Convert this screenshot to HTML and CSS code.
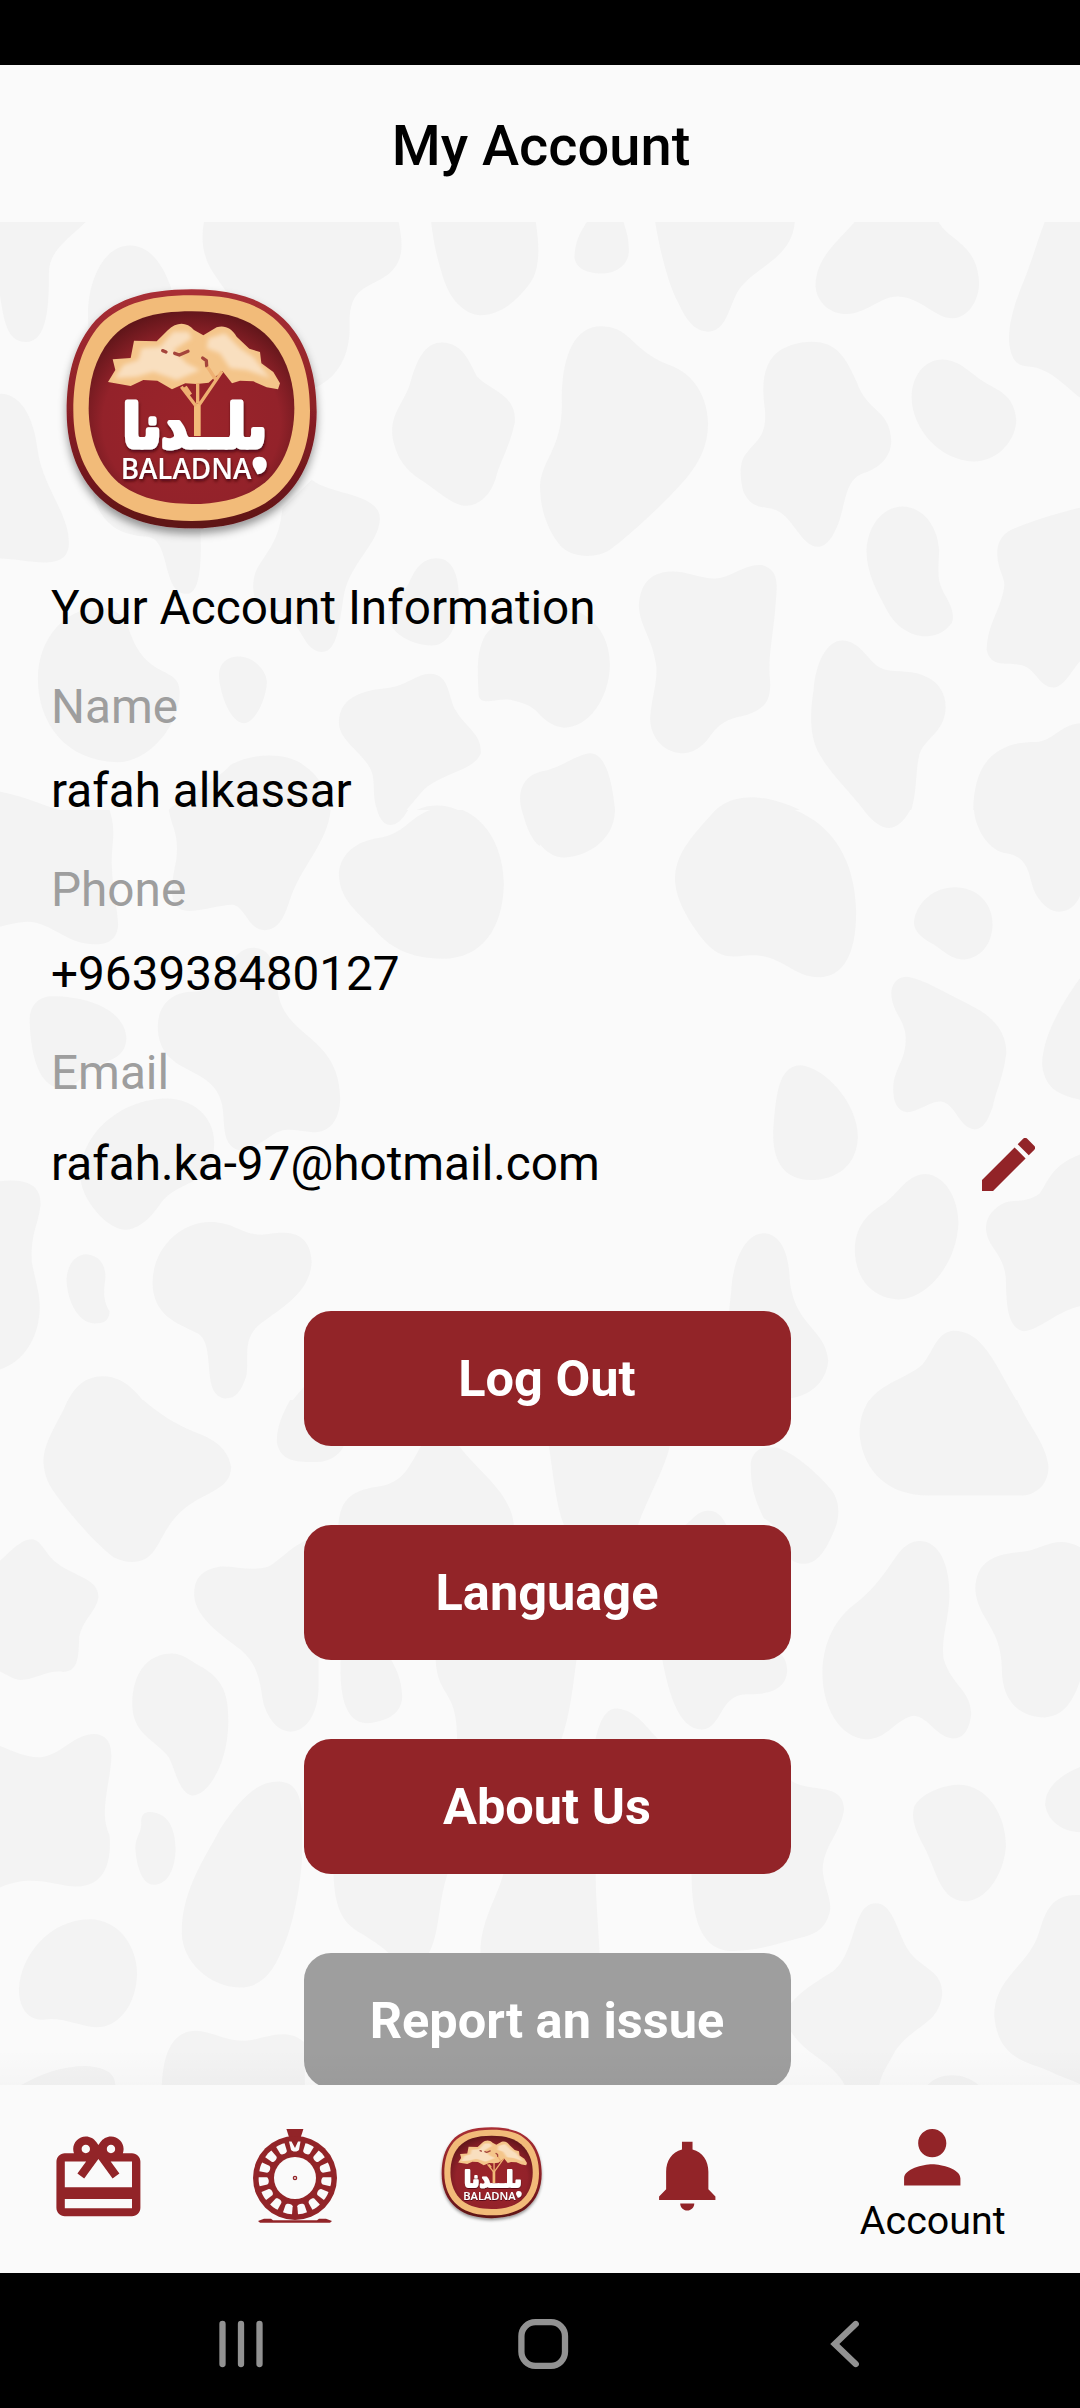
FILE: index.html
```
<!DOCTYPE html>
<html lang="en">
<head>
<meta charset="utf-8">
<title>My Account</title>
<link rel="stylesheet" href="styles.css">
</head>
<body>
<svg class="defs" width="0" height="0" aria-hidden="true">
  <defs>
    <linearGradient id="rim" x1="0" y1="0" x2="0" y2="1"><stop offset="0" stop-color="#a92f35"/><stop offset=".5" stop-color="#8c2026"/><stop offset="1" stop-color="#5e1216"/></linearGradient>
    <radialGradient id="field" cx=".5" cy=".58" r=".6"><stop offset="0" stop-color="#9b242a"/><stop offset=".72" stop-color="#93222a"/><stop offset="1" stop-color="#5e1519"/></radialGradient>
    <filter id="drop" x="-10%" y="-10%" width="120%" height="130%"><feDropShadow dx="0" dy="16" stdDeviation="12" flood-color="#000" flood-opacity=".4"/></filter>
    <filter id="text-drop" x="-10%" y="-20%" width="120%" height="150%"><feDropShadow dx="2" dy="7" stdDeviation="4" flood-color="#3c0508" flood-opacity=".8"/></filter>
    <filter id="soft"><feGaussianBlur stdDeviation="6"/></filter>
    <symbol id="logo" viewBox="0 0 900 840" preserveAspectRatio="none">
      <path filter="url(#drop)" fill="url(#rim)" d="M455 58C610 58 703 103 762 182C812 250 830 340 830 425C830 535 792 634 718 695C650 752 555 775 455 775C355 775 260 752 192 695C118 634 80 535 80 425C80 320 100 235 155 165C215 92 310 58 455 58Z"/>
      <path fill="#f2bb79" d="M455 76C605 76 688 114 746 192C793 258 810 340 810 422C810 526 776 618 706 677C642 731 552 753 455 753C358 753 268 731 204 677C134 618 100 526 100 422C100 322 120 242 170 176C228 107 320 76 455 76Z"/>
      <path fill="url(#field)" d="M455 124C575 124 650 155 700 218C745 275 763 345 763 415C763 505 733 587 676 637C620 683 542 702 455 702C368 702 290 683 234 637C177 587 146 505 146 415C146 335 165 265 210 210C262 148 340 124 455 124Z"/>
      <path fill="#f4c58a" d="M204 336L226 300L218 268L272 264L282 212L350 214L384 180C410 155 440 155 462 180L490 196L530 172C555 165 575 175 590 200L628 236L660 246L664 280L700 306L720 340L714 358L680 352L640 334L600 332L576 340L548 304L524 322L506 338L470 342L436 340L396 358L352 332L310 330L272 348Z"/>
      <path fill="#f9dfbf" filter="url(#soft)" d="M225 325L250 285L295 270L305 235L360 230L400 185L445 185L455 205L400 240L440 280L480 300L410 330L340 305L290 320ZM505 205L555 190L600 235L640 262L690 325L620 300L570 295L540 250L500 235Z"/>
      <path fill="none" stroke="#a5453c" stroke-width="10" stroke-linecap="round" stroke-linejoin="round" d="M368 242L378 246M404 250L418 255L444 244M488 264L499 272L500 288"/>
      <path fill="none" stroke="#f2bb79" stroke-width="20" d="M472 498V400"/>
      <path fill="none" stroke="#eeb072" stroke-width="10" d="M468 408L424 350M478 404L546 304M473 400V340M436 350L452 374M502 290L528 330"/>
      <g filter="url(#text-drop)" fill="#fff">
        <text class="logo-ar" x="464" y="532" text-anchor="middle" textLength="432" lengthAdjust="spacingAndGlyphs">ٮلــدنا</text>
        <text class="logo-en" x="242" y="628" textLength="392" lengthAdjust="spacingAndGlyphs">BALADNA</text>
        <path d="M658 560C640 560 634 575 640 590L652 613C668 613 680 600 680 583C680 570 672 560 658 560Z"/>
      </g>
    </symbol>
    <path id="slot" d="M-4.6-36C-1.6-36.6 1.6-36.6 4.6-36L3.6-28.2C3-25.8-3-25.8-3.6-28.2Z"/>
  </defs>
</svg>
<div class="status"></div>
<header class="header"><h1 class="title">My Account</h1></header>
<main class="main">
  <svg class="pattern" viewBox="0 222 1080 1863" aria-hidden="true">
    <svg x="0" y="210" width="540" height="600" viewBox="0 0 1568 1568" preserveAspectRatio="none">
      <path d="M0 0H280L250 30C200 75 142 105 142 165C142 240 140 345 75 345C20 345 12 290 0 225Z"/>
      <path d="M256 290C250 190 300 92 378 93C440 94 480 150 505 225C560 400 590 500 582 840C585 900 585 1003 543 1003C465 1003 500 850 420 853C350 850 290 820 270 740Z"/>
      <path d="M600 0C585 50 580 100 610 150C670 240 720 260 730 400L760 660L900 470C990 440 1018 370 1015 295C1015 200 1070 205 1125 170C1180 130 1170 80 1150 0Z"/>
      <path d="M1249 0C1255 80 1270 130 1290 185C1310 240 1355 275 1395 275C1450 275 1500 240 1540 190C1570 150 1568 90 1550 0Z"/>
      <path d="M0 480C70 480 100 560 108 620C120 720 200 790 200 870C200 950 80 912 0 911Z"/>
      <path d="M1140 595C1130 530 1180 500 1195 440C1215 380 1240 345 1285 346C1345 348 1365 400 1385 435C1420 470 1500 480 1495 555C1480 620 1450 660 1440 700C1425 745 1390 775 1350 773C1310 770 1265 730 1225 707C1170 675 1150 640 1140 595Z"/>
      <path d="M820 780L905 705C960 745 1105 740 1103 808C1100 870 1020 920 1000 1000C985 1070 985 1153 935 1155C870 1155 880 1050 780 1045C735 1045 725 980 745 940C775 890 810 870 820 780Z"/>
      <path d="M1268 910C1320 910 1335 965 1332 1030C1328 1090 1300 1138 1254 1138C1190 1138 1120 1100 1128 1050C1140 1000 1170 1010 1190 970C1205 940 1225 910 1268 910Z"/>
      <path d="M285 1040C350 1040 365 1070 380 1110C430 1230 520 1190 522 1258C522 1350 430 1443 340 1443C190 1440 110 1340 110 1225C110 1120 190 1040 285 1040Z"/>
      <path d="M636 1220C635 1180 665 1166 698 1167C740 1170 775 1205 775 1235C772 1280 740 1342 708 1341C670 1340 640 1270 636 1220Z"/>
      <path d="M984 1340C985 1270 1060 1255 1120 1250C1180 1245 1210 1212 1248 1212C1310 1213 1300 1280 1325 1310C1350 1350 1400 1370 1396 1420C1380 1465 1280 1470 1225 1520L1180 1568H1095C1080 1530 1090 1500 1080 1470C1060 1420 985 1390 984 1340Z"/>
      <path d="M1568 1000C1480 1040 1440 1080 1410 1110C1385 1150 1385 1190 1390 1270C1400 1300 1450 1270 1490 1282C1530 1290 1550 1300 1568 1320Z"/>
      <path d="M0 1520C50 1528 100 1545 170 1568H0ZM490 1568C520 1540 620 1500 670 1450C740 1415 840 1420 880 1450C930 1480 950 1520 957 1568ZM1568 1468C1520 1480 1500 1520 1515 1568H1568ZM1210 1568C1250 1550 1300 1555 1330 1568Z"/>
    </svg>
    <svg x="540" y="210" width="540" height="600" viewBox="0 0 1568 1568" preserveAspectRatio="none">
      <path d="M160 0C120 50 100 80 100 125C105 155 140 166 178 166C220 166 255 145 258 110C258 80 255 60 230 0Z"/>
      <path d="M330 0C340 80 370 190 400 240C425 290 450 318 490 318C535 315 545 270 565 230C600 150 730 140 740 30V0Z"/>
      <path d="M940 0C890 70 800 110 800 200C805 245 845 272 890 272C950 270 990 224 1040 226C1110 230 1150 285 1200 283C1245 280 1275 235 1275 190C1270 90 1190 80 1160 35L1140 0Z"/>
      <path d="M1480 0C1450 60 1430 130 1405 185C1375 250 1360 300 1362 345C1370 410 1400 408 1430 410C1490 420 1530 465 1568 490V0Z"/>
      <path d="M178 304C270 306 260 370 390 410C460 440 487 500 488 560C487 620 460 660 430 695C370 760 260 850 200 890C160 912 90 908 60 878C20 835 0 780 0 720C5 650 70 620 63 490C65 380 100 304 178 304Z"/>
      <path d="M788 344C865 344 890 390 920 450C950 530 1018 520 1020 605C1018 650 980 675 945 686C890 700 890 750 870 810C850 860 830 880 805 880C765 878 740 820 705 795C665 765 620 795 590 735C575 680 585 650 600 635C630 600 660 590 653 520C640 440 655 390 700 365C725 352 755 344 788 344Z"/>
      <path d="M1168 391C1230 393 1250 435 1320 465C1365 485 1380 515 1383 550C1380 610 1320 658 1260 657C1160 655 1080 570 1079 490C1080 430 1120 391 1168 391Z"/>
      <path d="M1052 775C1110 775 1155 825 1159 890C1155 960 1155 970 1175 1005C1195 1035 1205 1060 1195 1080C1170 1110 1140 1115 1110 1114C1070 1110 1030 1085 1010 1050C980 1000 948 950 948 890C952 820 1000 775 1052 775Z"/>
      <path d="M1568 778C1510 790 1420 815 1370 835C1325 855 1325 890 1330 920C1340 960 1352 965 1347 990C1335 1050 1300 1080 1297 1150C1310 1200 1360 1180 1400 1190C1440 1200 1450 1248 1492 1248C1525 1245 1545 1200 1568 1180Z"/>
      <path d="M385 945C430 945 470 965 510 963C560 960 600 920 650 929C695 945 688 980 685 1020C680 1100 660 1170 668 1230C672 1290 645 1305 600 1320C550 1330 525 1335 490 1380C460 1415 430 1420 410 1420C350 1415 318 1370 320 1325C325 1270 340 1240 338 1195C328 1120 290 1090 287 1035C290 970 330 945 385 945Z"/>
      <path d="M878 1125C930 1127 950 1175 985 1195C1020 1212 1070 1200 1110 1215C1155 1230 1178 1260 1178 1300C1175 1370 1110 1380 1100 1430C1090 1470 1095 1520 1078 1568H940C900 1520 840 1470 810 1420C780 1370 785 1310 795 1250C800 1190 830 1125 878 1125Z"/>
      <path d="M1568 1341C1510 1345 1490 1388 1440 1390C1350 1390 1260 1420 1258 1568H1568Z"/>
      <path d="M0 1025C100 1030 203 1070 203 1190C200 1280 140 1353 70 1353C40 1350 20 1338 0 1320ZM0 1468C60 1460 110 1420 148 1420C195 1425 210 1500 218 1568H0ZM510 1568C540 1545 570 1535 620 1535C670 1537 710 1550 755 1568Z"/>
    </svg>
    <svg x="0" y="810" width="540" height="600" viewBox="0 0 1568 1568" preserveAspectRatio="none">
      <path d="M0 0H318C340 60 322 90 325 150C328 220 342 260 343 300C340 345 305 351 275 351C190 350 150 293 80 292C50 293 20 300 0 305Z"/>
      <path d="M490 0C500 50 520 60 512 130C495 200 485 264 550 264C600 262 650 245 680 248C715 258 720 313 770 314C810 312 825 280 840 240C870 150 950 90 960 0Z"/>
      <path d="M1095 0C1110 50 1150 55 1185 0ZM1515 0C1530 50 1545 80 1568 95V0Z"/>
      <path d="M1300-10C1400 0 1463 90 1463 195C1460 310 1400 389 1285 389C1190 388 1130 360 1085 310C1030 260 985 230 984 165C990 110 1040 80 1100 73C1190 60 1190 0 1300-10Z"/>
      <path d="M735 360C785 362 800 400 805 460C815 600 985 580 988 755C985 810 960 842 910 842C860 840 830 825 790 850C740 880 720 892 700 890C640 880 655 820 645 770C620 660 460 700 458 565C460 500 510 475 560 475C670 470 655 362 735 360Z"/>
      <path d="M150 487C270 487 367 530 367 600C360 670 270 650 235 700C215 725 180 735 155 722C100 700 88 610 86 550C86 505 120 487 150 487Z"/>
      <path d="M485 754C560 756 622 800 622 870C620 990 520 960 465 1030C430 1075 395 1097 362 1097C310 1095 240 1020 234 965C225 850 350 754 485 754Z"/>
      <path d="M0 970C60 965 118 970 118 1030C110 1090 90 1100 92 1180C105 1240 118 1270 115 1310C110 1390 60 1445 0 1462Z"/>
      <path d="M252 1161C290 1165 308 1190 306 1225C300 1260 300 1285 318 1310C318 1335 300 1342 275 1342C225 1340 194 1280 193 1225C197 1185 220 1161 252 1161Z"/>
      <path d="M610 1077C680 1077 700 1110 760 1110C800 1108 900 1080 905 1182C900 1260 820 1300 760 1340C700 1380 725 1430 715 1480C700 1520 685 1538 655 1538C580 1530 630 1400 575 1368C510 1340 444 1320 443 1235C443 1150 520 1077 610 1077Z"/>
      <path d="M185 1568C210 1510 245 1480 300 1480C370 1482 400 1530 440 1568ZM830 1568C850 1540 870 1520 885 1505V1568Z"/>
    </svg>
    <svg x="540" y="810" width="540" height="600" viewBox="0 0 1568 1568" preserveAspectRatio="none">
      <path d="M0 0H218C215 90 120 124 70 124C40 124 20 110 0 90ZM940 0C990 60 1035 65 1075 0ZM1260 0C1265 50 1300 100 1345 112C1430 120 1415 180 1440 220C1480 285 1545 275 1568 225V0Z"/>
      <path d="M530-20C440 70 392 110 392 185C395 240 440 300 470 335C510 380 540 385 580 382C700 365 720 435 810 437C880 435 918 380 918 265C915 130 850 40 740 0Z"/>
      <path d="M1205 202C1265 202 1315 240 1314 300C1312 360 1270 391 1225 391C1180 385 1165 360 1130 345C1095 325 1085 310 1086 290C1095 240 1145 202 1205 202Z"/>
      <path d="M1065 436C1110 440 1180 480 1250 510C1320 540 1355 585 1354 635C1345 700 1325 730 1315 775C1300 815 1285 834 1262 835C1215 830 1210 770 1165 762C1130 760 1100 790 1065 790C1030 785 1022 750 1027 710C1040 660 1062 650 1062 595C1060 545 1020 530 1020 475C1025 445 1045 436 1065 436Z"/>
      <path d="M1568 440C1520 500 1458 590 1458 665C1465 730 1510 745 1568 757Z"/>
      <path d="M755 667C820 670 923 760 923 855C920 930 860 967 785 967C710 965 675 920 677 840C685 750 690 670 755 667Z"/>
      <path d="M1120 951C1180 955 1215 1020 1215 1080C1210 1190 1120 1279 1040 1279C960 1275 915 1220 914 1150C915 1080 960 1050 1005 1025C1045 995 1070 951 1120 951Z"/>
      <path d="M1568 900C1480 930 1475 975 1450 1003C1410 1030 1370 1015 1340 1030C1305 1050 1295 1070 1295 1095C1300 1150 1355 1160 1353 1240C1355 1300 1360 1355 1405 1362C1450 1360 1500 1310 1568 1297Z"/>
      <path d="M650 1106C700 1108 720 1160 724 1210C730 1350 830 1350 837 1440C830 1500 780 1530 730 1537H520C540 1440 545 1330 555 1260C560 1170 600 1106 650 1106Z"/>
      <path d="M1200 1361C1290 1361 1320 1450 1400 1568H942C970 1500 1060 1490 1110 1450C1140 1420 1150 1365 1200 1361Z"/>
    </svg>
    <svg x="0" y="1400" width="540" height="700" viewBox="0 0 1568 1568" preserveAspectRatio="none">
      <path d="M205-10C170 50 127 90 126 140C130 180 150 200 175 225C230 280 290 330 330 352C370 368 420 370 450 335C475 305 490 270 540 240C600 205 670 200 671 150C660 95 590 80 560 70C500 50 460 30 400-10Z"/>
      <path d="M850-10C820 30 803 60 804 95C815 138 860 139 920 139C960 138 990 120 1000 100V-10ZM1225 100C1180 160 1170 185 1090 195C1010 205 985 230 982 290H1493C1490 210 1400 170 1330 100Z"/>
      <path d="M0 360C30 340 60 312 92 312C120 312 130 345 165 365C215 395 285 400 286 440C280 475 245 485 230 530C228 570 230 608 185 609C140 603 100 627 60 627C35 625 20 615 0 608Z"/>
      <path d="M900 310C840 330 820 355 780 373C730 385 690 372 640 373C580 380 562 405 564 440C570 490 650 530 700 560C760 600 755 650 767 685C785 725 815 743 845 743C900 740 925 690 925 640V310Z"/>
      <path d="M500 568C540 570 550 585 590 600C650 630 663 660 663 720C662 820 600 887 558 886C520 880 510 830 490 800C450 760 384 750 384 680C385 610 430 568 500 568Z"/>
      <path d="M990 560C985 640 990 721 1065 724C1120 720 1165 705 1168 665C1165 620 1150 600 1120 560ZM1265 560C1260 670 1330 640 1327 760H1568V560Z"/>
      <path d="M0 775C50 790 80 802 120 800C190 790 210 749 275 748C335 752 325 800 318 840C300 920 300 940 318 975C325 1040 300 1090 220 1090C160 1088 90 1060 0 1092Z"/>
      <path d="M815 855C850 857 870 875 877 920V1030C870 1100 850 1180 820 1230C785 1300 740 1316 695 1316C610 1314 530 1260 528 1195C525 1100 600 1020 640 960C700 890 750 852 815 855Z"/>
      <path d="M435 923C490 925 508 960 510 1005C508 1060 480 1086 445 1086C410 1083 396 1040 393 1005C395 970 412 975 410 940C413 925 425 923 435 923Z"/>
      <path d="M260 1163C340 1163 398 1220 398 1285C395 1360 340 1405 280 1405C230 1403 180 1380 125 1388C80 1390 55 1360 55 1320C60 1240 150 1163 260 1163Z"/>
      <path d="M968 1050C970 1150 1000 1175 1060 1200C1090 1215 1110 1225 1130 1240H1245C1280 1190 1270 1120 1305 1050ZM1465 1050C1450 1110 1395 1160 1395 1240H1568V1050Z"/>
      <path d="M60 1535C120 1510 180 1492 250 1492C310 1495 335 1510 335 1535ZM470 1535C475 1450 510 1413 570 1413C630 1418 650 1435 710 1435C760 1435 830 1400 885 1440V1535Z"/>
    </svg>
    <svg x="540" y="1400" width="540" height="700" viewBox="0 0 1568 1568" preserveAspectRatio="none">
      <path d="M965-10C935 20 927 50 928 80C940 160 1010 214 1130 214H1400C1450 212 1480 180 1476 145C1465 90 1410 50 1380-10Z"/>
      <path d="M25 100C40 170 45 240 75 290H280C310 220 360 160 378 100ZM415 285C450 262 460 248 490 248C520 248 530 265 545 285Z"/>
      <path d="M612 140C620 110 650 102 690 107C740 120 800 160 845 200C875 230 870 270 850 300C825 345 800 367 765 367C690 365 730 300 650 265C615 210 612 180 612 140Z"/>
      <path d="M1105 316C1160 318 1190 370 1189 440C1185 500 1165 530 1172 580C1195 640 1252 650 1252 705C1245 745 1225 758 1200 758C1150 755 1130 710 1085 707C1030 715 1010 760 945 760C870 755 820 690 820 610C822 540 860 490 910 460C1030 390 1030 316 1105 316Z"/>
      <path d="M1568 330C1500 300 1460 335 1400 340C1320 345 1265 360 1264 425C1270 490 1340 510 1341 600C1340 680 1400 711 1465 711C1510 708 1540 690 1568 630Z"/>
      <path d="M0 560H110C95 640 90 700 60 765H0ZM350 560C370 650 400 738 470 738C530 735 520 660 600 659C650 660 715 655 718 605C715 580 705 570 680 560ZM160 765C175 710 195 690 225 691C280 695 310 735 350 765Z"/>
      <path d="M720 845C760 885 880 850 883 915C875 970 820 1000 821 1055C825 1090 843 1110 843 1140C830 1200 770 1200 730 1210C680 1220 620 1236 550 1234C480 1230 438 1180 440 1050L720 1030ZM0 1050H162C160 1110 170 1180 173 1240H0Z"/>
      <path d="M1220 862C1300 865 1353 930 1353 1000C1345 1070 1290 1123 1232 1123C1160 1120 1150 1050 1115 1000C1080 950 1080 930 1087 910C1110 880 1170 862 1220 862Z"/>
      <path d="M1568 822C1510 840 1465 870 1467 908C1475 945 1520 968 1568 968Z"/>
      <path d="M975 1127C1020 1127 1035 1180 1060 1220C1095 1275 1168 1270 1168 1330C1160 1400 1080 1400 1030 1460C1010 1490 990 1510 985 1535H885C850 1480 770 1470 725 1410V1355C760 1320 810 1300 850 1280C920 1240 905 1127 975 1127Z"/>
      <path d="M1568 1109C1490 1105 1470 1140 1450 1190C1420 1270 1320 1290 1319 1380C1330 1470 1400 1480 1470 1500C1510 1515 1540 1522 1568 1532ZM1125 1535C1160 1505 1230 1505 1275 1535Z"/>
    </svg>
  </svg>
  <div class="content">
    <svg class="brand"><use href="#logo"/></svg>
    <h2 class="heading">Your Account Information</h2>
    <dl class="info">
      <dt>Name</dt><dd>rafah alkassar</dd>
      <dt>Phone</dt><dd>+963938480127</dd>
      <dt>Email</dt>
      <dd class="email"><span>rafah.ka-97@hotmail.com</span>
        <svg class="pencil" viewBox="3 3 18 18" preserveAspectRatio="none"><path d="M3 17.25V21h3.75L17.81 9.94l-3.75-3.75L3 17.25zM20.71 7.04a1 1 0 0 0 0-1.41l-2.34-2.34a1 1 0 0 0-1.41 0l-1.83 1.83 3.75 3.75 1.83-1.83z"/></svg>
      </dd>
    </dl>
    <div class="actions">
      <button class="btn">Log Out</button>
      <button class="btn">Language</button>
      <button class="btn">About Us</button>
      <button class="btn btn-muted">Report an issue</button>
    </div>
  </div>
  <div class="edge"></div>
</main>
<nav class="tabs">
  <a class="tab"><svg class="gift" viewBox="0 0 24 24"><path d="M20 6h-2.18c.11-.31.18-.65.18-1 0-1.66-1.34-3-3-3-1.05 0-1.96.54-2.5 1.35l-.5.67-.5-.68C10.96 2.54 10.05 2 9 2 7.34 2 6 3.34 6 5c0 .35.07.69.18 1H4c-1.11 0-1.99.89-1.99 2L2 19c0 1.11.89 2 2 2h16c1.11 0 2-.89 2-2V8c0-1.11-.89-2-2-2zm-5-2c.55 0 1 .45 1 1s-.45 1-1 1-1-.45-1-1 .45-1 1-1zM9 4c.55 0 1 .45 1 1s-.45 1-1 1-1-.45-1-1 .45-1 1-1zm11 15.100H4v-2.200h16v2.200zm0-5H4V8h5.080L7 10.830 8.620 12 11 8.760l1-1.360 1 1.360L15.380 12 17 10.830 14.920 8H20v6.100z"/></svg></a>
  <a class="tab"><svg class="wheel" viewBox="-42 -49 84 94">
    <path d="M-8.600-49H8.400L5.500-40H-5.700Z"/><circle r="42"/>
    <g fill="#fafafa"><circle r="21"/>
      <path d="M-6-36.500L-3.500-36.500L0-30L3-36.500L5.500-36.500L4-28.200C3-25.800-3-25.800-4-28.200Z"/>
      <use href="#slot" transform="rotate(24)"/><use href="#slot" transform="rotate(48)"/><use href="#slot" transform="rotate(72)"/><use href="#slot" transform="rotate(96)"/><use href="#slot" transform="rotate(120)"/><use href="#slot" transform="rotate(144)"/><use href="#slot" transform="rotate(168)"/><use href="#slot" transform="rotate(192)"/><use href="#slot" transform="rotate(216)"/><use href="#slot" transform="rotate(240)"/><use href="#slot" transform="rotate(264)"/><use href="#slot" transform="rotate(288)"/><use href="#slot" transform="rotate(312)"/><use href="#slot" transform="rotate(336)"/></g>
    <circle r="1.600" fill="none" stroke="#922428" stroke-width="1.400"/>
    <path d="M-37 43L-31 40.700H-24L-22 42.300H22L24 40.700H31L37 43L35 44.700H-35Z"/>
  </svg></a>
  <a class="tab"><svg class="mini"><use href="#logo"/></svg></a>
  <a class="tab"><svg class="bell" viewBox="0 0 24 24"><path d="M12 22c1.100 0 2-.9 2-2h-4c0 1.100.89 2 2 2zm6-6v-5c0-3.070-1.630-5.640-4.500-6.320V2.500h-3v2.180C7.640 5.360 6 7.920 6 11v5l-2 2v1h16v-1l-2-2z"/></svg></a>
  <a class="tab tab-wide"><svg class="person" viewBox="0 0 24 24"><path d="M12 12c2.210 0 4-1.790 4-4s-1.790-4-4-4-4 1.790-4 4 1.790 4 4 4zm0 2c-2.670 0-8 1.340-8 4v2h16v-2c0-2.660-5.330-4-8-4z"/></svg><span>Account</span></a>
</nav>
<footer class="system">
  <svg viewBox="219 2318 640 52"><path d="M222.500 2324V2364M241 2324V2364M259.500 2324V2364M855.700 2324L834.800 2344L855.700 2364"/><rect x="521.400" y="2322.200" width="43.600" height="43.600" rx="14"/></svg>
</footer>
</body>
</html>
```
FILE: styles.css
```
* { box-sizing: border-box; }
body {
  margin: 0;
  width: 1080px;
  height: 2408px;
  display: flex;
  flex-direction: column;
  overflow: hidden;
  background: #fafafa;
  color: #000;
  font-family: Roboto, sans-serif;
}
.defs { position: absolute; }
.status { height: 65px; background: #000; }
.header {
  height: 157px;
  display: flex;
  align-items: center;
  justify-content: center;
  padding: 4px 0 0 2px;
}
.title { margin: 0; font-size: 56px; font-weight: 500; line-height: 66px; }
.main { position: relative; height: 1863px; overflow: hidden; }
.pattern { position: absolute; inset: 0; width: 1080px; height: 1863px; fill: #f3f3f3; }
.content { position: relative; padding: 48px 45px 0 51px; }
.brand { display: block; width: 300px; height: 280px; margin-left: -11px; }
.heading { margin: 31px 0 44px; font-size: 47.7px; font-weight: 400; line-height: 55px; }
.info { margin: 0; font-size: 47.7px; line-height: 55px; }
.info dt { color: #9e9e9e; }
.info dd { margin: 29px 0 44px; }
.info .email { display: flex; align-items: center; justify-content: space-between; margin: 36px 0 0; }
.pencil { width: 53px; height: 53px; fill: #922428; }
.actions { display: flex; flex-direction: column; align-items: center; gap: 79px; padding: 118.5px 0 0 8px; }
.btn {
  width: 487px;
  height: 135px;
  flex: none;
  border: 0;
  border-radius: 27px;
  background: #922428;
  color: #fff;
  font: 700 50.5px/58px Roboto, sans-serif;
  padding: 2px 0 0;
}
.btn-muted { background: #9e9e9e; }
.edge {
  position: absolute;
  inset: auto 0 0;
  height: 36px;
  background: linear-gradient(rgba(0,0,0,0), rgba(0,0,0,.02));
}
.tabs { height: 188px; display: flex; background: #fafafa; fill: #922428; }
.tab { flex: 1; display: flex; flex-direction: column; align-items: center; }
.tab-wide { flex: 1.5; font-size: 39.4px; line-height: 46px; }
.gift { width: 100.8px; height: 100.8px; margin-top: 43px; }
.wheel { width: 84px; height: 94px; margin-top: 44px; }
.mini { width: 120px; height: 106.4px; margin-top: 35.4px; }
.bell { width: 84.5px; height: 84.5px; margin-top: 48px; }
.person { width: 84.5px; height: 84.5px; margin: 29.5px 0 -1px; }
.system { height: 135px; background: #000; padding: 45px 0 0 219px; }
.system svg { display: block; width: 640px; height: 52px; fill: none; stroke: #929292; stroke-width: 6.3; stroke-linecap: round; }
.logo-ar { font: 700 178px "DejaVu Sans", sans-serif; stroke: #fff; stroke-width: 15; stroke-linejoin: round; }
.logo-en { font: 600 88px "Open Sans", Lato, sans-serif; }
```
